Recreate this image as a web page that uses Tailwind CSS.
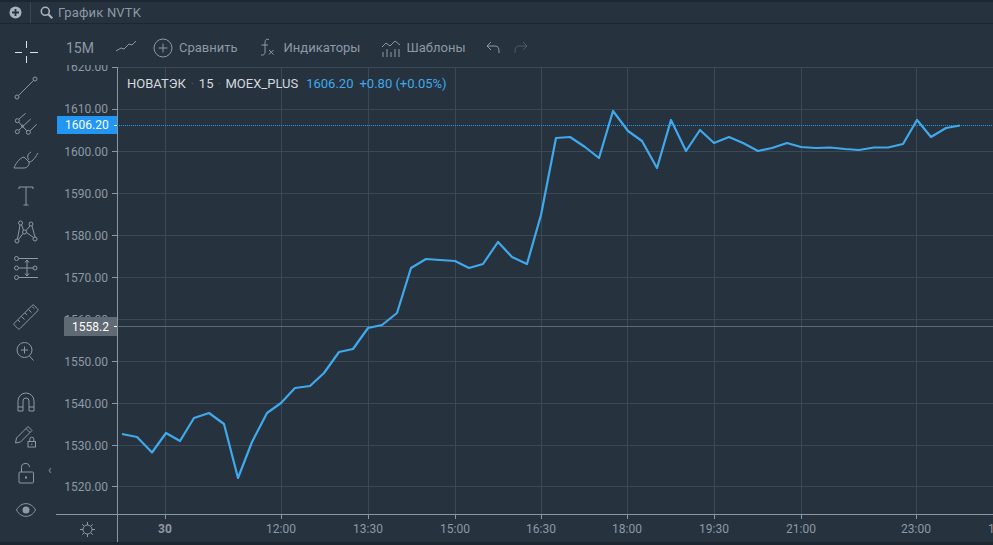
<!DOCTYPE html>
<html lang="ru">
<head>
<meta charset="UTF-8">
<title>График NVTK</title>
<script src="https://cdn.jsdelivr.net/npm/@tailwindcss/browser@4"></script>
</head>
<body class="bg-[#26323e] font-['Roboto',sans-serif] overflow-hidden">
<div class="w-[993px] h-[545px] flex flex-col overflow-hidden">
  <!-- Верхняя строка -->
  <header class="h-[24px] shrink-0 flex items-center border-t-2 border-b border-t-[#1d2731] border-b-[#1d2731] text-[#8d99a5]">
    <div class="w-[31px] h-full flex items-center justify-center border-r border-[#3a4753]">
      <svg class="w-[13px] h-[13px]" viewBox="0 0 13 13"><circle cx="6.5" cy="6.5" r="6" fill="#a9b3bc"/><path d="M6.5 3v7M3 6.5h7" stroke="#26323e" stroke-width="1.8"/></svg>
    </div>
    <svg class="w-[13px] h-[13px] ml-[9px]" viewBox="0 0 13 13" fill="none" stroke="#a9b3bc"><circle cx="5.3" cy="5.3" r="4" stroke-width="1.6"/><path d="M8.3 8.3l4 4" stroke-width="2.2"/></svg>
    <span class="ml-[5px] text-[13px] tracking-[0.2px]">График NVTK</span>
  </header>

  <div class="flex-1 flex min-h-0">
    <!-- Панель инструментов -->
    <aside class="w-[56px] shrink-0 flex flex-col items-center relative pt-[15px] pr-[4px] text-[#8d99a5]">
      <svg class="w-[26px] h-[26px] shrink-0" viewBox="0 0 26 26" fill="none" stroke="#dfe4e8"><path d="M13.500 2v7M13.500 17v7M2 13.500h7M17 13.500h8"/></svg>
      <svg class="w-[24px] h-[24px] shrink-0 mt-[11px]" viewBox="0 0 24 24" fill="none" stroke="currentColor"><circle cx="21" cy="3" r="2"/><circle cx="3" cy="21" r="2"/><path d="M4.500 19.500l15-15"/></svg>
      <svg class="w-[24px] h-[24px] shrink-0 mt-[12px]" viewBox="0 0 24 24" fill="none" stroke="currentColor"><circle cx="3.300" cy="19.700" r="2"/><circle cx="14.300" cy="20.300" r="2"/><circle cx="3.300" cy="8.700" r="2"/><circle cx="8.500" cy="14" r="1"/><path d="M5 7l6.700-5.700M5 18l11.700-11M4.500 10l8.300 8.800M16 18.800l6.700-6.500"/></svg>
      <svg class="w-[26px] h-[24px] shrink-0 mt-[10px]" viewBox="0 0 26 24" fill="none" stroke="currentColor"><path d="M1 22h10c3 0 6-3 5-6l-5-5C6 12 2 19 1 22z"/><path d="M16 14c-2-2-2-6 2-8M16 16c4 0 7-6 9-9"/></svg>
      <svg class="w-[16px] h-[20px] shrink-0 mt-[16px]" viewBox="0 0 16 20" fill="none" stroke="currentColor"><path d="M1 3V1h14v2M8 1v18M5.500 19h5"/></svg>
      <svg class="w-[24px] h-[24px] shrink-0 mt-[14px]" viewBox="0 0 24 24" fill="none" stroke="currentColor"><circle cx="6.500" cy="3" r="2"/><circle cx="17" cy="4" r="2"/><circle cx="3" cy="21" r="2"/><circle cx="21" cy="19" r="2"/><circle cx="10.500" cy="12" r="2"/><path d="M6 5L3.500 19M7.500 4.500l2 6M16 6l-4.500 5M18 6l3 11M12.500 12.500l7 5M4.500 19.500l4.500-6"/></svg>
      <svg class="w-[24px] h-[24px] shrink-0 mt-[12px]" viewBox="0 0 24 24" fill="none" stroke="currentColor"><circle cx="2.500" cy="2.500" r="2"/><circle cx="2.500" cy="12" r="2"/><circle cx="21" cy="12" r="2"/><circle cx="2.500" cy="21.500" r="2"/><path d="M5 2.500h19M5 12h14M5 21.500h19M13 4v16M11 6.500L13 4l2 2.500M11 17.500l2 2.500 2-2.500"/></svg>
      <svg class="w-[26px] h-[26px] shrink-0 mt-[24px]" viewBox="0 0 26 26" fill="none" stroke="currentColor"><path d="M1.500 19L19 1.500c.7-.7 1.500-.7 2.200 0l3.300 3.300c.7.7.7 1.500 0 2.200L7 24.500c-.7.7-1.500.7-2.200 0L1.500 21.200c-.7-.7-.7-1.500 0-2.200z"/><path d="M5 16l2 2M8.500 12.500l3 3M12 9l2 2M15.500 5.500l3 3M19 2.500l2 2"/></svg>
      <svg class="w-[20px] h-[20px] shrink-0 mt-[12px]" viewBox="0 0 20 20" fill="none" stroke="currentColor"><circle cx="8.500" cy="8" r="7.500"/><path d="M5 8h7M8.500 4.500v7M13.500 14l4 4.500"/></svg>
      <svg class="w-[18px] h-[20px] shrink-0 mt-[30px]" viewBox="0 0 18 20" fill="none" stroke="currentColor"><path d="M1 19V9a8 8 0 0 1 16 0v10h-5V9a3 3 0 0 0-6 0v10zM1 15h5M12 15h5"/></svg>
      <svg class="w-[24px] h-[24px] shrink-0 mt-[13px]" viewBox="0 0 24 24" fill="none" stroke="currentColor"><path d="M1.500 18l1-5L14 1.500l4 4L6.500 17zM12 3.500l4 4"/><rect x="14" y="16.500" width="7.500" height="5.500"/><path d="M15.800 16.500v-2.300a2 2 0 0 1 4 0v2.300"/><path d="M17.800 18.500v1.500"/></svg>
      <svg class="w-[16px] h-[21px] shrink-0 mt-[14px]" viewBox="0 0 16 21" fill="none" stroke="currentColor"><rect x="1" y="9" width="14.500" height="11" rx="1"/><path d="M3.500 9V5a4 4 0 0 1 8-1"/><path d="M8 13.500v2" stroke-width="2"/></svg>
      <svg class="w-[20px] h-[14px] shrink-0 mt-[19px]" viewBox="0 0 20 14" fill="none" stroke="currentColor"><path d="M.5 7C5-1.500 15-1.500 19.500 7 15 15.500 5 15.500.5 7z"/><circle cx="10" cy="7" r="3.500" fill="currentColor" stroke="none"/></svg>
      <span class="absolute left-[48px] top-[440px] text-[12px] leading-none">‹</span>
    </aside>

    <main class="flex-1 flex flex-col min-w-0">
      <!-- Панель графика -->
      <div class="h-[43px] shrink-0 flex items-center pt-[5px] pl-[10px] text-[13px] text-[#8d99a5]">
        <span class="text-[14px]">15M</span>
        <svg class="w-[20px] h-[12px] ml-[22px] mb-[4px]" viewBox="0 0 20 12" fill="none" stroke="currentColor"><path d="M0 11l5-3 3 1 5-5 3 1 4-4"/></svg>
        <svg class="w-[20px] h-[20px] ml-[17px]" viewBox="0 0 20 20" fill="none" stroke="currentColor"><circle cx="10" cy="10" r="9"/><path d="M5.500 10h9M10 5.500v9"/></svg>
        <span class="ml-[6px]">Сравнить</span>
        <svg class="w-[16px] h-[18px] ml-[21px] mb-[2px]" viewBox="0 0 16 18" fill="none" stroke="currentColor"><path d="M10 1.500C7 .5 6 2 6 5v9c0 2.500-1.500 3.500-4 3M2.500 7H9M10 12l4.500 4.500M14.500 12L10 16.500"/></svg>
        <span class="ml-[9px]">Индикаторы</span>
        <svg class="w-[18px] h-[17px] ml-[22px]" viewBox="0 0 18 17" fill="none" stroke="currentColor"><path d="M0 7l4-4 4 3 5-5 5 4M1 17v-5M5 17v-8M9 17v-5M13 17V9M17 17v-8"/></svg>
        <span class="ml-[6px]">Шаблоны</span>
        <svg class="w-[14px] h-[13px] ml-[21px] mb-[2px]" viewBox="0 0 14 13" fill="none" stroke="#8d99a5"><path d="M5 1L1 5l4 4M1 5h8c3 0 4 2 4 5v2"/></svg>
        <svg class="w-[14px] h-[13px] ml-[14px] mb-[2px]" viewBox="0 0 14 13" fill="none" stroke="#4e5b67"><path d="M9 1l4 4-4 4M13 5H5C2 5 1 7 1 10v2"/></svg>
      </div>

      <!-- График -->
      <div class="flex-1 relative min-h-0">
        <svg class="absolute left-[-56px] top-[-67px] w-[993px] h-[545px]" viewBox="0 0 993 545" fill="none">
          <g stroke="#3b4957">
            <path d="M117 67.500H993M117 109.500H993M117 151.500H993M117 193.500H993M117 235.500H993M117 277.500H993M117 319.500H993M117 361.500H993M117 403.500H993M117 445.500H993M117 486.500H993"/>
            <path d="M165.500 67V514M281.500 67V514M368.500 67V514M455.500 67V514M541.500 67V514M627.500 67V514M714.500 67V514M801.500 67V514M916.500 67V514"/>
          </g>
          <g stroke="#8a98a5">
            <path d="M117.500 67V542M56 514.500H993"/>
            <path d="M112 67.500h5M112 109.500h5M112 151.500h5M112 193.500h5M112 235.500h5M112 277.500h5M112 319.500h5M112 361.500h5M112 403.500h5M112 445.500h5M112 486.500h5"/>
            <path d="M165.500 514v5M281.500 514v5M368.500 514v5M455.500 514v5M541.500 514v5M627.500 514v5M714.500 514v5M801.500 514v5M916.500 514v5"/>
          </g>
          <path d="M117 125.500H993" stroke="#2196f3" stroke-dasharray="1 1"/>
          <path d="M117 326.500H993" stroke="#5d6974"/>
          <polyline stroke="#40a9ec" stroke-width="2.200" stroke-linejoin="round" points="122,434 137,437 152,452.500 166,433 180,441 194,418 209,413 224,424 238,478 252,442 267,413 281,403 295,388 310,386 324,373 339,352 353,349 368,328 382,325 397,313 411,268 426,259 440,260 455,261 469,268 483,264 498,242 512,257 527,264 541,215 556,138 570,137 585,147 599,158 613,111 628,131 642,141 657,168 671,120 686,151 700,130 714,143 729,137 743,143 758,151 772,148 787,143 801,147 816,148 830,147.500 845,149 859,150 874,147.500 888,147.500 903,144 917,120 931,137 946,128 960,125.500"/>
        </svg>

        <!-- Шкала цены -->
        <div class="absolute left-0 top-[-2px] w-[52px] h-[7px] overflow-hidden text-[12px] leading-[14px] text-right text-[#8d99a5]"><span class="block mt-[-5px]">1620.00</span></div>
        <div class="absolute left-0 top-[35px] w-[52px] text-[12px] leading-[14px] text-right text-[#8d99a5]">1610.00</div>
        <div class="absolute left-0 top-[78px] w-[52px] text-[12px] leading-[14px] text-right text-[#8d99a5]">1600.00</div>
        <div class="absolute left-0 top-[120px] w-[52px] text-[12px] leading-[14px] text-right text-[#8d99a5]">1590.00</div>
        <div class="absolute left-0 top-[162px] w-[52px] text-[12px] leading-[14px] text-right text-[#8d99a5]">1580.00</div>
        <div class="absolute left-0 top-[204px] w-[52px] text-[12px] leading-[14px] text-right text-[#8d99a5]">1570.00</div>
        <div class="absolute left-0 top-[246px] w-[52px] text-[12px] leading-[14px] text-right text-[#8d99a5]">1560.00</div>
        <div class="absolute left-0 top-[288px] w-[52px] text-[12px] leading-[14px] text-right text-[#8d99a5]">1550.00</div>
        <div class="absolute left-0 top-[330px] w-[52px] text-[12px] leading-[14px] text-right text-[#8d99a5]">1540.00</div>
        <div class="absolute left-0 top-[372px] w-[52px] text-[12px] leading-[14px] text-right text-[#8d99a5]">1530.00</div>
        <div class="absolute left-0 top-[413px] w-[52px] text-[12px] leading-[14px] text-right text-[#8d99a5]">1520.00</div>

        <!-- Метки на шкале -->
        <div class="absolute left-[1px] top-[49px] w-[60px] h-[18px] bg-[#2196f3] text-white text-[12px] pl-[8px] flex items-center">1606.20<span class="ml-[5px] w-[4px] h-px bg-white"></span></div>
        <div class="absolute left-[8px] top-[250px] w-[53px] h-[19px] bg-[#5f6a75] text-white text-[12px] pl-[8px] flex items-center">1558.2<span class="ml-[5px] w-[4px] h-px bg-white"></span></div>

        <!-- Легенда -->
        <div class="absolute left-[71px] top-[9px] flex text-[13px] leading-[15px] text-[#d5dade]">
          <span>НОВАТЭК</span><span class="w-[13px] text-center text-[#4b5864]">·</span><span>15</span><span class="w-[12px] text-center text-[#4b5864]">·</span><span>MOEX_PLUS</span>
          <span class="ml-[8px] text-[#40a9ec]">1606.20</span><span class="ml-[6px] text-[#40a9ec]">+0.80 (+0.05%)</span>
        </div>

        <!-- Шкала времени -->
        <svg class="absolute left-[24px] top-[455px] w-[15px] h-[15px]" viewBox="0 0 15 15" fill="none" stroke="#8d99a5"><circle cx="7.500" cy="7.500" r="4.500"/><path d="M7.500 0v3M7.500 12v3M0 7.500h3M12 7.500h3M2.200 2.200l2 2M10.800 10.800l2 2M12.800 2.200l-2 2M4.200 10.800l-2 2"/></svg>
        <span class="absolute left-[102px] top-[455px] text-[12px] font-bold leading-[15px] text-[#8d99a5]">30</span>
        <span class="absolute left-[210px] top-[455px] text-[12px] leading-[15px] text-[#8d99a5]">12:00</span>
        <span class="absolute left-[297px] top-[455px] text-[12px] leading-[15px] text-[#8d99a5]">13:30</span>
        <span class="absolute left-[384px] top-[455px] text-[12px] leading-[15px] text-[#8d99a5]">15:00</span>
        <span class="absolute left-[470px] top-[455px] text-[12px] leading-[15px] text-[#8d99a5]">16:30</span>
        <span class="absolute left-[556px] top-[455px] text-[12px] leading-[15px] text-[#8d99a5]">18:00</span>
        <span class="absolute left-[643px] top-[455px] text-[12px] leading-[15px] text-[#8d99a5]">19:30</span>
        <span class="absolute left-[730px] top-[455px] text-[12px] leading-[15px] text-[#8d99a5]">21:00</span>
        <span class="absolute left-[845px] top-[455px] text-[12px] leading-[15px] text-[#8d99a5]">23:00</span>
        <span class="absolute left-[932px] top-[455px] text-[12px] leading-[15px] text-[#8d99a5]">1</span>
      </div>
      <div class="h-[3px] shrink-0 bg-[#1d2731] ml-[-56px]"></div>
    </main>
  </div>
</div>
</body>
</html>
